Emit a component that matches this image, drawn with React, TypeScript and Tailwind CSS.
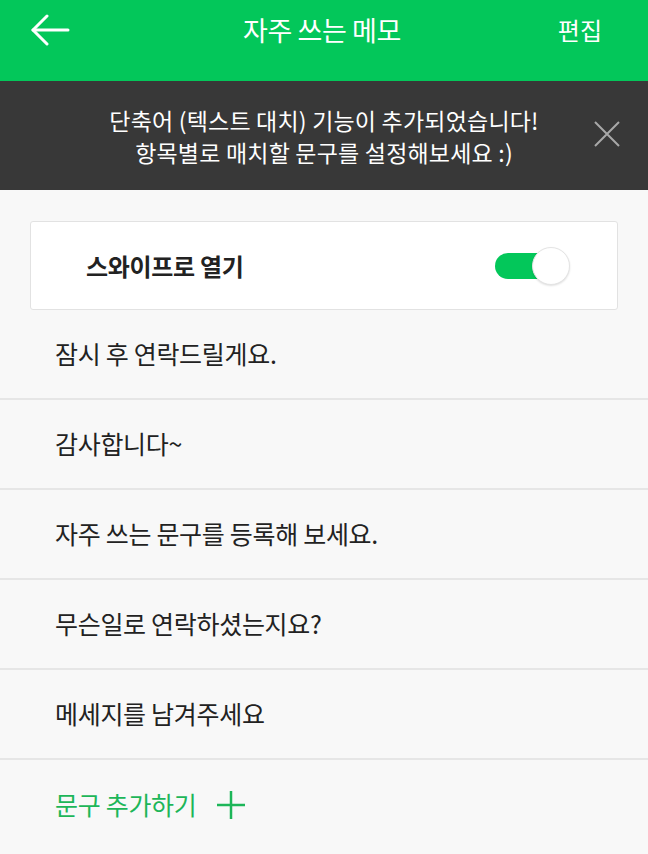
import React from 'react';

const memos = [
  '잠시 후 연락드릴게요.',
  '감사합니다~',
  '자주 쓰는 문구를 등록해 보세요.',
  '무슨일로 연락하셨는지요?',
  '메세지를 남겨주세요',
];

export default function App() {
  const [swipe, setSwipe] = React.useState(true);
  const [showNotice, setShowNotice] = React.useState(true);

  return (
    <div
      className="min-h-[854px] w-full bg-[#f8f8f8]"
      style={{ fontFamily: '"Noto Sans CJK KR", "Noto Sans", sans-serif' }}
    >
      {/* top bar */}
      <header className="h-[81px] bg-[#03c75a] text-white">
        <div className="flex h-[60px] items-center justify-between px-[30px]">
          <svg width="40" height="32" viewBox="0 0 40 32" fill="none" stroke="white" strokeWidth="3" strokeLinecap="round" strokeLinejoin="round">
            <path d="M38 16H3" />
            <path d="M17 2L3 16l14 14" />
          </svg>
          <h1 className="pl-[16px] text-[27px] font-normal tracking-[-0.4px]">자주 쓰는 메모</h1>
          <button className="pr-[16px] text-[24px]">편집</button>
        </div>
      </header>

      {showNotice && (
        <div className="relative flex h-[109px] items-center justify-center bg-[#383838] text-white">
          <p className="text-center text-[23px] leading-[32px] tracking-[0.2px]">
            단축어 (텍스트 대치) 기능이 추가되었습니다!
            <br />
            항목별로 매치할 문구를 설정해보세요 :)
          </p>
          <button
            className="absolute right-[28px] top-[40px]"
            onClick={() => setShowNotice(false)}
          >
            <svg width="26" height="26" viewBox="0 0 26 26" stroke="#a8a8a8" strokeWidth="2">
              <path d="M1 1l24 24M25 1L1 25" />
            </svg>
          </button>
        </div>
      )}

      <div className="px-[30px] pt-[31px]">
        <div className="flex h-[89px] items-center justify-between rounded-[3px] border border-[#e2e2e2] bg-white pl-[55px] pr-[48px]">
          <span className="text-[24px] font-bold tracking-[-0.3px] text-[#222]">스와이프로 열기</span>
          <button
            onClick={() => setSwipe((s) => !s)}
            className="relative h-[38px] w-[76px]"
          >
            <span className={`absolute left-[2px] top-[6px] h-[26px] w-[60px] rounded-full ${swipe ? 'bg-[#03c75a]' : 'bg-[#cfcfcf]'}`} />
            <span className={`absolute top-0 h-[38px] w-[38px] rounded-full border border-[#e4e4e4] bg-white shadow-[0_1px_2px_rgba(0,0,0,0.12)] ${swipe ? 'left-[39px]' : 'left-[-6px]'}`} />
          </button>
        </div>
      </div>

      <ul>
        {memos.map((m) => (
          <li
            key={m}
            className="flex h-[90px] items-center border-b-2 border-[#e6e6e6] pl-[55px] text-[25px] tracking-[-0.3px] text-[#222]"
          >
            {m}
          </li>
        ))}
        <li className="flex h-[90px] items-center gap-[20px] pl-[55px] text-[25px] tracking-[-0.3px] text-[#1db659]">
          <span>문구 추가하기</span>
          <svg width="28" height="28" viewBox="0 0 28 28" stroke="#1db659" strokeWidth="2.5">
            <path d="M14 0v28M0 14h28" />
          </svg>
        </li>
      </ul>
    </div>
  );
}
